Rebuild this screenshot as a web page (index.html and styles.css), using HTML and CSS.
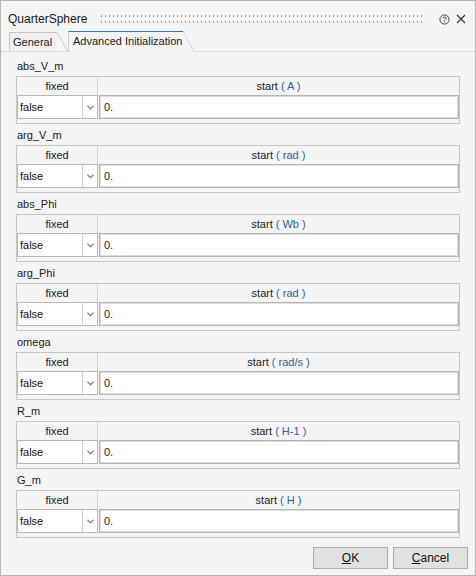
FILE: index.html
```html
<!DOCTYPE html>
<html>
<head>
<meta charset="utf-8">
<link rel="stylesheet" href="styles.css">
</head>
<body>
<div class="window">
  <div class="titlebar">
    <span class="title">QuarterSphere</span>
    <div class="grip"><div class="dots"></div><div class="dots"></div></div>
    <svg class="help" width="11" height="11" viewBox="0 0 11 11"><circle cx="5.5" cy="5.5" r="4.6" fill="none" stroke="#444" stroke-width="1"/><path d="M3.9 4.3 C3.9 2.6 7.1 2.6 7.1 4.3 C7.1 5.4 5.5 5.4 5.5 6.6" fill="none" stroke="#444" stroke-width="1"/><rect x="5" y="7.6" width="1" height="1" fill="#444"/></svg>
    <svg class="close" width="10" height="10" viewBox="0 0 10 10"><path d="M1 1 L9 9 M9 1 L1 9" stroke="#333" stroke-width="1.1"/></svg>
  </div>
  <div class="tabs">
    <div class="tab">General</div>
    <div class="tab active">Advanced Initialization</div>
  </div>
  <div class="sections">
    <div class="section">
      <div class="label">abs_V_m</div>
      <div class="tbl">
        <div class="thead"><div class="th first">fixed</div><div class="th">start <span class="unit">( A )</span></div></div>
        <div class="row">
          <div class="combo"><span class="val">false</span><span class="arrow"><svg width="7" height="5" viewBox="0 0 7 5"><path d="M0.5 0.8 L3.5 3.8 L6.5 0.8" fill="none" stroke="#8a8a8a" stroke-width="1.4"/></svg></span></div>
          <div class="input">0.</div>
        </div>
      </div>
    </div>
    <div class="section">
      <div class="label">arg_V_m</div>
      <div class="tbl">
        <div class="thead"><div class="th first">fixed</div><div class="th">start <span class="unit">( rad )</span></div></div>
        <div class="row">
          <div class="combo"><span class="val">false</span><span class="arrow"><svg width="7" height="5" viewBox="0 0 7 5"><path d="M0.5 0.8 L3.5 3.8 L6.5 0.8" fill="none" stroke="#8a8a8a" stroke-width="1.4"/></svg></span></div>
          <div class="input">0.</div>
        </div>
      </div>
    </div>
    <div class="section">
      <div class="label">abs_Phi</div>
      <div class="tbl">
        <div class="thead"><div class="th first">fixed</div><div class="th">start <span class="unit">( Wb )</span></div></div>
        <div class="row">
          <div class="combo"><span class="val">false</span><span class="arrow"><svg width="7" height="5" viewBox="0 0 7 5"><path d="M0.5 0.8 L3.5 3.8 L6.5 0.8" fill="none" stroke="#8a8a8a" stroke-width="1.4"/></svg></span></div>
          <div class="input">0.</div>
        </div>
      </div>
    </div>
    <div class="section">
      <div class="label">arg_Phi</div>
      <div class="tbl">
        <div class="thead"><div class="th first">fixed</div><div class="th">start <span class="unit">( rad )</span></div></div>
        <div class="row">
          <div class="combo"><span class="val">false</span><span class="arrow"><svg width="7" height="5" viewBox="0 0 7 5"><path d="M0.5 0.8 L3.5 3.8 L6.5 0.8" fill="none" stroke="#8a8a8a" stroke-width="1.4"/></svg></span></div>
          <div class="input">0.</div>
        </div>
      </div>
    </div>
    <div class="section">
      <div class="label">omega</div>
      <div class="tbl">
        <div class="thead"><div class="th first">fixed</div><div class="th">start <span class="unit">( rad/s )</span></div></div>
        <div class="row">
          <div class="combo"><span class="val">false</span><span class="arrow"><svg width="7" height="5" viewBox="0 0 7 5"><path d="M0.5 0.8 L3.5 3.8 L6.5 0.8" fill="none" stroke="#8a8a8a" stroke-width="1.4"/></svg></span></div>
          <div class="input">0.</div>
        </div>
      </div>
    </div>
    <div class="section">
      <div class="label">R_m</div>
      <div class="tbl">
        <div class="thead"><div class="th first">fixed</div><div class="th">start <span class="unit">( H-1 )</span></div></div>
        <div class="row">
          <div class="combo"><span class="val">false</span><span class="arrow"><svg width="7" height="5" viewBox="0 0 7 5"><path d="M0.5 0.8 L3.5 3.8 L6.5 0.8" fill="none" stroke="#8a8a8a" stroke-width="1.4"/></svg></span></div>
          <div class="input">0.</div>
        </div>
      </div>
    </div>
    <div class="section">
      <div class="label">G_m</div>
      <div class="tbl">
        <div class="thead"><div class="th first">fixed</div><div class="th">start <span class="unit">( H )</span></div></div>
        <div class="row">
          <div class="combo"><span class="val">false</span><span class="arrow"><svg width="7" height="5" viewBox="0 0 7 5"><path d="M0.5 0.8 L3.5 3.8 L6.5 0.8" fill="none" stroke="#8a8a8a" stroke-width="1.4"/></svg></span></div>
          <div class="input">0.</div>
        </div>
      </div>
    </div>
  </div>
  <div class="footer">
    <div class="btn"><u>O</u>K</div>
    <div class="btn"><u>C</u>ancel</div>
  </div>
</div>
</body>
</html>
```
FILE: styles.css
```css
html, body {
  margin: 0;
  padding: 0;
}
body {
  background: #f4f4f4;
  font-family: "Liberation Sans", Arial, sans-serif;
  font-size: 11px;
  color: #1a1a1a;
}
.window {
  width: 476px;
  height: 576px;
  box-sizing: border-box;
  border: 1px solid #b4b4b4;
  background: #f4f4f4;
  overflow: hidden;
}
.titlebar {
  height: 30px;
  box-sizing: border-box;
  padding: 6px 0 0 7px;
  display: flex;
  align-items: center;
}
.title {
  font-size: 12px;
  color: #1a1a1a;
}
.grip {
  flex: 1;
  margin: 0 14px 0 14px;
  display: flex;
  flex-direction: column;
  gap: 4px;
}
.dots {
  height: 2px;
  background-image: linear-gradient(90deg, #9c9c9c 1px, transparent 1px);
  background-size: 4px 2px;
}
.help {
  margin-right: 6px;
}
.close {
  margin-right: 9px;
}
.tabs {
  height: 20px;
  display: flex;
  align-items: flex-end;
  padding-left: 8px;
  border-bottom: 1px solid #dcdcdc;
}
.tab {
  position: relative;
  box-sizing: border-box;
  height: 19px;
  width: 48px;
  margin-right: 11px;
  padding: 3px 0 0 3px;
  border-left: 1px solid #c4c4c4;
  border-top: 1px solid #c4c4c4;
  background: #f0f0f0;
  margin-bottom: 0;
  color: #1a1a1a;
  white-space: nowrap;
}
.tab::after {
  content: "";
  position: absolute;
  top: -1px;
  right: -11px;
  width: 11px;
  height: 20px;
  background: linear-gradient(to top right, transparent calc(50% - 0.7px), #c4c4c4 50%, transparent calc(50% + 0.7px));
}
.tab.active {
  width: auto;
  height: 21px;
  padding: 3px 1px 0 4px;
  border-left: 1px solid #d0d0d0;
  border-top: 1px solid #2a7cbf;
  background: #f4f4f4;
  margin-bottom: -1px;
}
.tab.active::after {
  height: 21px;
  background: linear-gradient(to top right, #f4f4f4 calc(50% - 0.7px), #cfcfcf 50%, transparent calc(50% + 0.7px));
}
.sections {
  padding: 2px 0 0 15px;
}
.section {
  height: 69px;
}
.label {
  height: 22px;
  box-sizing: border-box;
  padding-top: 5px;
  line-height: 14px;
  padding-left: 1px;
}
.tbl {
  width: 444px;
  height: 48px;
  box-sizing: border-box;
  border: 1px solid #c6c6c6;
  background: #f4f4f4;
}
.thead {
  display: grid;
  grid-template-columns: 81px 361px;
  height: 18px;
}
.th {
  text-align: center;
  line-height: 18px;
  color: #1a1a1a;
}
.th.first {
  border-right: 1px solid #d4d4d4;
}
.unit {
  color: #2563a8;
}
.row {
  display: grid;
  grid-template-columns: 81px 360px;
  column-gap: 1px;
  height: 24px;
}
.combo {
  display: flex;
  box-sizing: border-box;
  border: 1px solid #b8b8b8;
  background: #ffffff;
}
.val {
  flex: 1;
  padding-left: 2px;
  line-height: 22px;
  border-right: 1px solid #d0d0d0;
  color: #111;
}
.arrow {
  width: 14px;
  display: flex;
  align-items: center;
  justify-content: center;
  padding-top: 1px;
}
.input {
  box-sizing: border-box;
  border: 1px solid #b4b4b4;
  box-shadow: inset 0 0 0 1px #dedede;
  background: #ffffff;
  line-height: 22px;
  padding-left: 4px;
  color: #2a1a10;
}
.footer {
  display: flex;
  justify-content: flex-end;
  gap: 5px;
  padding: 10px 7px 0 0;
}
.btn {
  width: 75px;
  height: 22px;
  box-sizing: border-box;
  border: 1px solid #adadad;
  background: #e1e1e1;
  text-align: center;
  line-height: 20px;
  font-size: 12px;
  color: #111;
}
```
